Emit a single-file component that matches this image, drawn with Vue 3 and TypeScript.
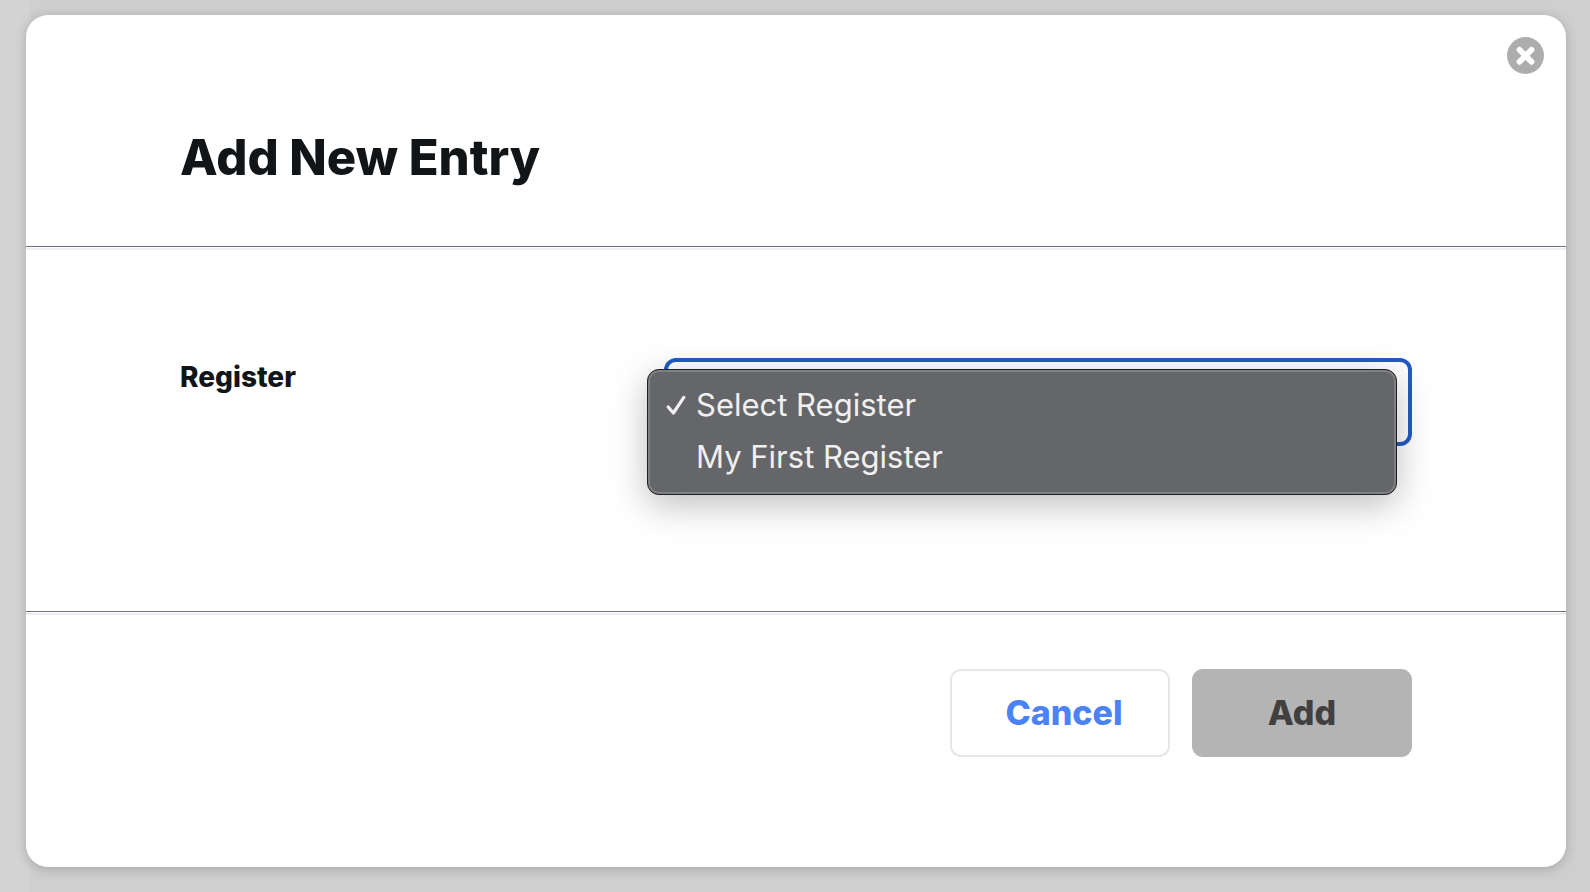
<script setup lang="ts">
import { ref } from 'vue'

interface RegisterOption {
  value: string
  label: string
}

const options: RegisterOption[] = [
  { value: '', label: 'Select Register' },
  { value: 'my-first-register', label: 'My First Register' },
]

const selected = ref('')
const menuOpen = ref(true)

function choose(value: string): void {
  selected.value = value
  menuOpen.value = false
}
</script>

<template>
  <div class="backdrop">
    <form class="dialog" role="dialog" aria-labelledby="dialog-title" @submit.prevent>
      <button class="close" type="button" aria-label="Close">
        <svg viewBox="0 0 37 37" aria-hidden="true">
          <circle cx="18.5" cy="18.5" r="18.5" fill="#adadad" />
          <path d="M12.5 12.8 24.5 24.8M24.5 12.8 12.5 24.8" stroke="#fff" stroke-width="5.8" stroke-linecap="round" />
        </svg>
      </button>

      <header class="head">
        <h1 id="dialog-title">Add New Entry</h1>
      </header>

      <hr />

      <div class="body">
        <label for="register">Register</label>
        <div class="field">
          <select id="register" v-model="selected">
            <option v-for="option in options" :key="option.value" :value="option.value">
              {{ option.label }}
            </option>
          </select>
          <ul v-if="menuOpen" class="menu" role="listbox" aria-label="Register">
            <li
              v-for="option in options"
              :key="option.value"
              role="option"
              :aria-selected="option.value === selected"
              @click="choose(option.value)"
            >
              <span class="tick">
                <svg v-if="option.value === selected" viewBox="0 0 20 20" aria-hidden="true">
                  <path d="M2.2 12 7.4 18 17.8 2.4" fill="none" stroke="#f0f0f0" stroke-width="3.2" stroke-linecap="round" stroke-linejoin="round" />
                </svg>
              </span>
              {{ option.label }}
            </li>
          </ul>
        </div>
      </div>

      <hr />

      <footer class="actions">
        <button class="btn cancel" type="button">Cancel</button>
        <button class="btn add" type="submit" :disabled="selected === ''">Add</button>
      </footer>
    </form>
  </div>
</template>

<style>
body {
  margin: 0;
}
</style>

<style scoped>
.backdrop {
  display: flex;
  box-sizing: border-box;
  min-height: 100vh;
  padding: 15px 24px 25px 26px;
  background: linear-gradient(to right, #d3d3d3 30px, #cfcfcf 30px);
  font-family: Inter, "Liberation Sans", sans-serif;
  color: #111518;
}

.dialog {
  position: relative;
  flex: 1;
  background: #fff;
  border-radius: 22px;
  box-shadow: 0 2px 12px rgba(0, 0, 0, 0.2);
}

.close {
  position: absolute;
  top: 22px;
  right: 22px;
  width: 37px;
  height: 37px;
  padding: 0;
  border: 0;
  border-radius: 50%;
  background: none;
  cursor: pointer;
}

.close svg {
  display: block;
}

.head {
  padding: 107px 10% 52px;
}

h1 {
  margin: 0;
  font-size: 49px;
  font-weight: 800;
  line-height: 72px;
}

hr {
  height: 1px;
  margin: 0;
  border: 0;
  border-top: 1px solid #69737f;
  border-bottom: 2px solid #eee;
}

.body {
  display: grid;
  grid-template-columns: 11fr 17fr;
  align-items: start;
  padding: 108px 10% 165px;
}

label {
  font-size: 28px;
  font-weight: 800;
  line-height: 38px;
}

.field {
  position: relative;
}

select {
  display: block;
  box-sizing: border-box;
  width: 100%;
  height: 88px;
  padding: 0 32px;
  border: 4px solid #225bc3;
  border-radius: 12px;
  outline: 0;
  appearance: none;
  background: #fff;
  color: #111518;
  font: inherit;
  font-size: 31px;
}

.menu {
  position: absolute;
  top: 11px;
  left: -17px;
  box-sizing: border-box;
  width: calc(100% + 2px);
  margin: 0;
  padding: 9px 16px 11px;
  border: 1px solid #1f2021;
  border-radius: 12px;
  background: #656669;
  box-shadow: inset 0 0 0 2px #808182, 0 10px 36px rgba(0, 0, 0, 0.26);
  color: #f0f0f0;
  font-size: 31px;
  line-height: 52px;
  list-style: none;
}

.menu li {
  display: flex;
  align-items: center;
  height: 52px;
  gap: 10px;
  cursor: default;
}

.tick {
  width: 22px;
  padding-left: 2px;
  box-sizing: border-box;
}

.tick svg {
  display: block;
  width: 20px;
  height: 20px;
}

.actions {
  display: flex;
  flex-wrap: wrap;
  justify-content: flex-end;
  gap: 22px;
  padding: 54px 10% 110px;
}

.btn {
  box-sizing: border-box;
  width: 220px;
  height: 88px;
  border-radius: 11px;
  font: inherit;
  font-size: 34px;
  font-weight: 800;
  cursor: pointer;
}

.cancel {
  padding: 0 0 2px 8px;
  border: 2px solid #e7e7e7;
  background: #fff;
  color: #4b83f7;
}

.add {
  padding: 0 0 2px;
  border: 0;
  background: #b4b4b4;
  color: #404040;
}
</style>
